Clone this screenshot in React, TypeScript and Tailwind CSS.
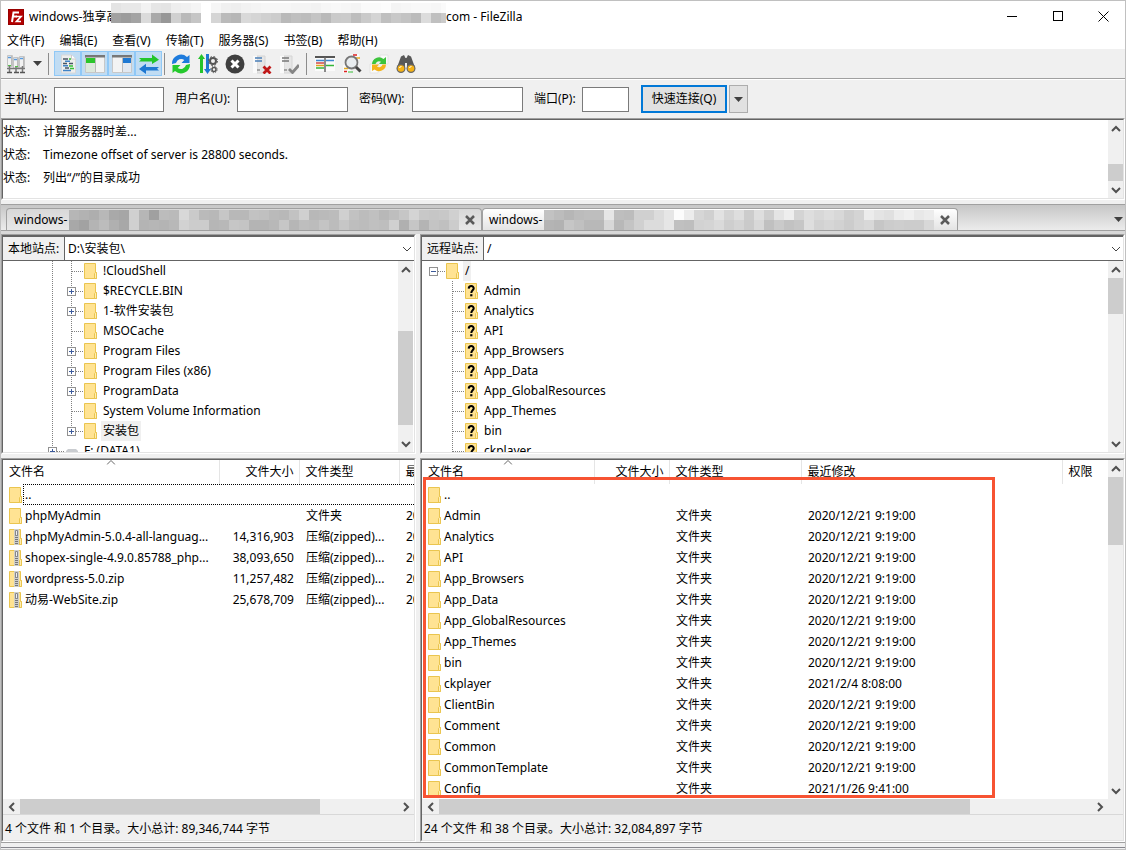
import type { ReactNode } from "react"

const menus = ["文件(F)", "编辑(E)", "查看(V)", "传输(T)", "服务器(S)", "书签(B)", "帮助(H)"]

const logs = ["计算服务器时差...", "Timezone offset of server is 28800 seconds.", "列出“/”的目录成功"]

const localDirs = [
  { name: "!CloudShell", box: false },
  { name: "$RECYCLE.BIN", box: true },
  { name: "1-软件安装包", box: true },
  { name: "MSOCache", box: false },
  { name: "Program Files", box: true },
  { name: "Program Files (x86)", box: true },
  { name: "ProgramData", box: true },
  { name: "System Volume Information", box: false },
  { name: "安装包", box: true, selected: true }
]

const remoteDirs = [
  "Admin",
  "Analytics",
  "API",
  "App_Browsers",
  "App_Data",
  "App_GlobalResources",
  "App_Themes",
  "bin",
  "ckplayer"
]

const localFiles = [
  { name: "phpMyAdmin", size: "", type: "文件夹" },
  { name: "phpMyAdmin-5.0.4-all-languag...", size: "14,316,903", type: "压缩(zipped)..." },
  { name: "shopex-single-4.9.0.85788_php...", size: "38,093,650", type: "压缩(zipped)..." },
  { name: "wordpress-5.0.zip", size: "11,257,482", type: "压缩(zipped)..." },
  { name: "动易-WebSite.zip", size: "25,678,709", type: "压缩(zipped)..." }
]

const remoteFiles = [
  { name: "Admin", date: "2020/12/21 9:19:00" },
  { name: "Analytics", date: "2020/12/21 9:19:00" },
  { name: "API", date: "2020/12/21 9:19:00" },
  { name: "App_Browsers", date: "2020/12/21 9:19:00" },
  { name: "App_Data", date: "2020/12/21 9:19:00" },
  { name: "App_GlobalResources", date: "2020/12/21 9:19:00" },
  { name: "App_Themes", date: "2020/12/21 9:19:00" },
  { name: "bin", date: "2020/12/21 9:19:00" },
  { name: "ckplayer", date: "2021/2/4 8:08:00" },
  { name: "ClientBin", date: "2020/12/21 9:19:00" },
  { name: "Comment", date: "2020/12/21 9:19:00" },
  { name: "Common", date: "2020/12/21 9:19:00" },
  { name: "CommonTemplate", date: "2020/12/21 9:19:00" },
  { name: "Config", date: "2021/1/26 9:41:00" }
]

// one hex digit pair per cell, grey level
const titleCells = [
  "e4e8e8f2e6e4eef0f4fff6f0eef2f4f6f6f6f4f4f2f6f8f6f4fafafcf4f6f8f8f6fa",
  "a19ca3dba997d0b9c5ffd5bab6d9d5d0ccb9bfbcc4b9cacbbdcad4bfc8c3bbdcc0cac0"
]
const tabCellsA = [
  "b6b2aeb8a9a6d0b6a0bcbad8cabab8c6b8b8c2c0bab8c2d0b8babcd0c2bcc0b8bec6d4c8c6c8d0d4cc",
  "a8a2b4bcb0a8d0b4b6b4b8d2ccccb6b8c6c4b4b4b8c6b6bebcc4bcc6bebcc0bed0b0c6b4c4c0cc"
]
const tabCellsB = [
  "c2bcb6bcbebee6bebcd0d0dce6fcecd6d0e2d4deccdeceE4eed4ded8ddd8ced4ece4e0ecf0e8ec",
  "b4b2c6c0b8b8d8b8c4d0dcdce6c0bed2d4daced4cad8c0cac2c6ded2d6d2ccd4d8c6ccceccccd8"
]

// blurred-out host name
function Mosaic({ cells, count }: { cells: string[]; count: number }) {
  return (
    <svg width={count * 10} height="20" className="shrink-0" shapeRendering="crispEdges" aria-hidden="true">
      {cells.map((row, y) =>
        Array.from({ length: count }, (_, x) => {
          const v = row.slice(x * 2, x * 2 + 2) || "d0"
          return <rect key={`${x}-${y}`} x={x * 10} y={y * 10} width="10" height="10" fill={`#${v}${v}${v}`} />
        })
      )}
    </svg>
  )
}

function Folder({ kind = "plain" }: { kind?: "plain" | "unknown" | "zip" }) {
  return (
    <svg width="13" height="16" viewBox="0 0 13 16" className="relative shrink-0" aria-hidden="true">
      <path d="M.5.5h11v9h1v6H.5z" fill="#ffe393" stroke="#eac54f" />
      <path d="M10.5 15.5v-5l1-1h1v6z" fill="#ffedb0" stroke="#eac54f" />
      {kind === "unknown" && (
        <>
          <path d="M3.7 5.6C3.8 2.2 8.900 2.300 8.700 5.400 8.600 7.300 6.300 7.500 6.300 10" fill="none" stroke="#000" strokeWidth="2" />
          <rect x="5.2" y="11.2" width="2.2" height="2.1" fill="#000" />
        </>
      )}
      {kind === "zip" && (
        <>
          <path d="M5 0h5v16H5z" fill="#cfcfca" />
          <path d="M7.5 6v10" stroke="#77777a" strokeWidth="3" strokeDasharray="1 1" />
          <path d="M6.500 1.500h2v5h-2z" fill="#eee" stroke="#88888a" />
        </>
      )}
    </svg>
  )
}

function Branch({ box = "", up = true, down = true, line = true }: { box?: string; up?: boolean; down?: boolean; line?: boolean }) {
  return (
    <svg width="17" height="20" viewBox="0 0 17 20" className="shrink-0" shapeRendering="crispEdges" aria-hidden="true">
      <g stroke="#808080" strokeDasharray="1 1">
        {up && <path d="M4.5 0v10" />}
        {down && <path d="M4.5 10v10" />}
        {line && <path d="M5 10.5h11" />}
      </g>
      {box && (
        <>
          <rect x=".5" y="6.5" width="8" height="8" fill="#fff" stroke="#919191" />
          <path d={box === "+" ? "M2 10.5h5M4.5 8v5" : "M2 10.5h5"} stroke="#3c5a9a" />
        </>
      )}
    </svg>
  )
}

function Chevron({ dir, thin = false }: { dir: "up" | "down" | "left" | "right"; thin?: boolean }) {
  const d = {
    up: "M1 7l4-4 4 4",
    down: "M1 3l4 4 4-4",
    left: "M7 1L3 5l4 4",
    right: "M3 1l4 4-4 4"
  }[dir]
  return (
    <svg width="10" height="10" viewBox="0 0 10 10" fill="none" stroke={thin ? "#444" : "#505050"} strokeWidth={thin ? 1 : 2} aria-hidden="true">
      <path d={d} />
    </svg>
  )
}

function Caret() {
  return (
    <svg width="9" height="5" viewBox="0 0 9 5" aria-hidden="true">
      <path d="M0 0h9L4.5 5z" fill="#404040" />
    </svg>
  )
}

function VScroll({ before, thumb }: { before: string; thumb: string }) {
  return (
    <div className="flex w-[15px] shrink-0 flex-col bg-[#f0f0f0]">
      <button aria-label="向上滚动" className="flex h-[17px] shrink-0 items-center justify-center">
        <Chevron dir="up" />
      </button>
      <div className={before} />
      <div className={`bg-[#cdcdcd] ${thumb}`} />
      <div className="flex-1" />
      <button aria-label="向下滚动" className="flex h-[17px] shrink-0 items-center justify-center">
        <Chevron dir="down" />
      </button>
    </div>
  )
}

function HScroll({ thumb }: { thumb: string }) {
  return (
    <div className="flex h-[15px] min-w-0 flex-1 bg-[#f0f0f0]">
      <button aria-label="向左滚动" className="flex w-[17px] shrink-0 items-center justify-center">
        <Chevron dir="left" />
      </button>
      <div className={`bg-[#cdcdcd] ${thumb}`} />
      <div className="flex-1" />
      <button aria-label="向右滚动" className="flex w-[17px] shrink-0 items-center justify-center">
        <Chevron dir="right" />
      </button>
    </div>
  )
}

// classic two-step sunken edge
function Sunken({ className = "", children }: { className?: string; children: ReactNode }) {
  return (
    <div className={`flex min-w-0 flex-col border border-t-[#a0a0a0] border-r-white border-b-white border-l-[#a0a0a0] ${className}`}>
      <div className="flex min-h-0 flex-1 flex-col border border-t-[#646464] border-r-[#e3e3e3] border-b-[#e3e3e3] border-l-[#646464]">
        {children}
      </div>
    </div>
  )
}

const server = (
  <>
    <path d="M5 2h8v17H5z" fill="#e6e6e6" stroke="#d4d4d4" />
    <path d="M1 2h4v17H1z" fill="#fafafa" />
  </>
)

const icons: Record<string, ReactNode> = {
  sites: (
    <>
      <path d="M1.500 1.500h5v11h-5zM7.500 3.500h5v11h-5zM13.500 2.500h5v11h-5z" fill="#f2f2f2" stroke="#c4c4c4" />
      <path d="M2 3.500h3M8 5.500h3M14 4.500h3" stroke="#5b9bdc" strokeWidth="1.500" />
      <path d="M5.500 2v10M11.500 4v10M17.500 3v10" stroke="#bbb" />
      <path d="M1 14.500h18M3.500 12v6M10 13v5M16.500 12v6" stroke="#777" strokeWidth="1.500" />
      <path d="M1 18.500h5M8 18.500h5M14 18.500h5" stroke="#555" strokeWidth="1.500" />
      <path d="M9 12.500h3M2 11.500h3" stroke="#55c04a" />
    </>
  ),
  log: (
    <>
      <path d="M3.500 1h10l4 4v14h-14z" fill="#eee" stroke="#d8d8d8" />
      <path d="M13.500 1v4h4" fill="#fff" stroke="#ccc" />
      <path d="M5 5h5M5 9.500h4M11 9.500h4M7 14h4" stroke="#4a5562" strokeWidth="1.500" />
      <path d="M7 7.200h5M5 11.800h5M5 16.500h8" stroke="#3f83c6" strokeWidth="1.500" />
      <path d="M11 12h4M12 14.500h4M11 5h2" stroke="#35c135" strokeWidth="1.500" />
    </>
  ),
  local: (
    <>
      <path d="M.5 1.500h19v17H.5z" fill="#f3f3f3" stroke="#c8c8c8" />
      <path d="M0 1h20v2.500H0z" fill="#777" />
      <path d="M1 4h9v5H1z" fill="#2bc52b" />
      <path d="M1 9h9v9H1z" fill="#dde8dd" />
      <path d="M10.500 4v14" stroke="#bbb" />
    </>
  ),
  remote: (
    <>
      <path d="M.5 1.500h19v17H.5z" fill="#f3f3f3" stroke="#c8c8c8" />
      <path d="M0 1h20v2.500H0z" fill="#777" />
      <path d="M11 4h8v5h-8z" fill="#1e78d2" />
      <path d="M11 9h8v9h-8z" fill="#e2e8f0" />
      <path d="M10.500 4v14" stroke="#bbb" />
    </>
  ),
  queue: (
    <>
      <path d="M0 4h13V.5L20 5.700 13 10V7.500H0L2 5.800z" fill="#22c52b" />
      <path d="M20 13H7V9.700L0 15l7 5v-3.500h13l-2-1.700z" fill="#1e78d2" />
    </>
  ),
  refresh: (
    <>
      <path d="M1 10a9 9 0 0 1 15-7l2.500-2v8h-8l2.800-3A5.300 5.300 0 0 0 5 9z" fill="#1e7bdc" />
      <path d="M19 10a9 9 0 0 1-15 7l-2.500 2v-8h8l-2.800 3A5.300 5.300 0 0 0 15 11z" fill="#25c92d" />
    </>
  ),
  process: (
    <>
      <path d="M3.500 0L7 5H5v14H2V5H0z" fill="#25c42b" />
      <path d="M9.500 20L6 15h2V0h3v15h2z" fill="#1e78d2" />
      <circle cx="15" cy="7" r="3" fill="none" stroke="#555" strokeWidth="2" />
      <circle cx="15" cy="7" r="4.500" fill="none" stroke="#555" strokeDasharray="1.800 1.730" />
      <circle cx="16" cy="15.500" r="2" fill="none" stroke="#555" strokeWidth="1.500" />
      <circle cx="16" cy="15.500" r="3.200" fill="none" stroke="#555" strokeDasharray="1.200 1.310" />
    </>
  ),
  cancel: (
    <>
      <circle cx="10" cy="10" r="9.500" fill="#3f3f3f" />
      <path d="M6.500 6.500l7 7M13.500 6.500l-7 7" stroke="#fff" strokeWidth="3" />
    </>
  ),
  disconnect: (
    <>
      {server}
      <path d="M3 4h7M3 7h7" stroke="#4a7fb8" strokeWidth="1.500" />
      <path d="M5 16h3" stroke="#666" />
      <path d="M11.500 12.500l7 7M18.500 12.500l-7 7" stroke="#c01818" strokeWidth="2.800" />
    </>
  ),
  reconnect: (
    <>
      {server}
      <path d="M3 4h7M3 7h7" stroke="#777" strokeWidth="1.500" />
      <path d="M5 16h3" stroke="#666" />
      <path d="M10 15l3.500 3.500L20 11" fill="none" stroke="#858585" strokeWidth="2.800" />
    </>
  ),
  filter: (
    <>
      <path d="M0 2h20v15H0z" fill="#fafafa" />
      <path d="M0 3h20" stroke="#555" strokeWidth="2" />
      <path d="M10 3v15" stroke="#666" strokeWidth="1.500" />
      <path d="M1 6.500h8M11 6.500h8" stroke="#3d88d2" strokeWidth="1.500" />
      <path d="M1 9h8" stroke="#d14747" strokeWidth="1.500" />
      <path d="M1 11.500h8" stroke="#e3a11a" strokeWidth="1.500" />
      <path d="M1 14h8M11 11.500h8" stroke="#34b63a" strokeWidth="1.500" />
    </>
  ),
  search: (
    <>
      <path d="M8 0h9v10H8zM1 11h8v8H1z" fill="#fafafa" />
      <path d="M11 1h4M2 17.500h3" stroke="#d22" strokeWidth="1.500" />
      <path d="M14 4h4M2 14.500h4" stroke="#e8ad20" strokeWidth="1.500" />
      <path d="M6 18h5" stroke="#3b3" />
      <circle cx="9.500" cy="8.500" r="6" fill="#e9edf0" stroke="#777" strokeWidth="1.800" />
      <path d="M14 13l4.500 4.500" stroke="#444" strokeWidth="3" />
    </>
  ),
  compare: (
    <>
      <path d="M11 1h8v9h-8zM1 10h8v9H1z" fill="#fafafa" stroke="#e4e4e4" />
      <path d="M3 10a7 7 0 0 1 11.500-5L17 3v7h-7l2-2.200A3.800 3.800 0 0 0 6.500 10z" fill="#3cc43c" />
      <path d="M17 10.500a7 7 0 0 1-11.500 5L3 17v-6.500h7l-2 2.300a3.800 3.800 0 0 0 5.500-2.300z" fill="#f4b41b" />
    </>
  ),
  find: (
    <>
      <path d="M5 2.500L8 1l1.500 3h1L12 1l3 1.500 4 11H11V9H9v4.500H1z" fill="#585858" />
      <circle cx="5" cy="14.500" r="4.500" fill="#666" />
      <circle cx="15" cy="14.500" r="4.500" fill="#666" />
      <circle cx="5" cy="14.500" r="3.300" fill="#f6b316" />
      <circle cx="15" cy="14.500" r="3.300" fill="#f6b316" />
      <path d="M3.500 14a2 2 0 0 1 2-1.500M13.500 14a2 2 0 0 1 2-1.500" stroke="#fff" fill="none" />
    </>
  )
}

function ToolButton({ name, label, pressed = false }: { name: string; label: string; pressed?: boolean }) {
  return (
    <button
      aria-label={label}
      className={
        pressed
          ? "flex h-[25px] w-[27px] items-center justify-center border border-[#90c8f6] bg-[#c0dcf3]"
          : "flex h-[25px] w-[27px] items-center justify-center"
      }>
      <svg width="20" height="20" viewBox="0 0 20 20" aria-hidden="true">
        {icons[name]}
      </svg>
    </button>
  )
}

function TitleBar() {
  return (
    <header className="flex h-[31px] shrink-0 items-center bg-white pl-[7px]">
      <svg width="16" height="16" viewBox="0 0 16 16" className="mr-[5px]" aria-hidden="true">
        <rect width="16" height="16" fill="#b30000" />
        <rect x=".5" y=".5" width="15" height="15" fill="none" stroke="#7d0000" strokeDasharray="1 1" />
        <path d="M4 13L5.500 3.500H11M4.500 7.500H9" fill="none" stroke="#fff" strokeWidth="2" />
        <path d="M8 7.500h5L8.500 12.500H13" fill="none" stroke="#fff" strokeWidth="1.700" />
      </svg>
      <div className="w-[82px] overflow-hidden whitespace-nowrap">windows-独享高</div>
      <div className="w-[335px] overflow-hidden pb-2">
        <Mosaic cells={titleCells} count={34} />
      </div>
      <div>com - FileZilla</div>
      <div className="ml-auto flex">
        <button aria-label="最小化" className="flex h-[30px] w-[46px] items-center justify-center">
          <svg width="11" height="11" stroke="#000" shapeRendering="crispEdges">
            <path d="M0 5.500h10" />
          </svg>
        </button>
        <button aria-label="最大化" className="flex h-[30px] w-[46px] items-center justify-center">
          <svg width="11" height="11" stroke="#000" fill="none" shapeRendering="crispEdges">
            <path d="M.5.5h9v9h-9z" />
          </svg>
        </button>
        <button aria-label="关闭" className="flex h-[30px] w-[44px] items-center justify-center">
          <svg width="11" height="11" stroke="#000">
            <path d="M.5.5l10 10M10.500.5l-10 10" />
          </svg>
        </button>
      </div>
    </header>
  )
}

function Toolbar() {
  return (
    <div className="flex h-[31px] shrink-0 items-center border-b border-white bg-[#f0f0f0]">
      <div className="flex h-full w-full items-center border-b border-[#a0a0a0] pl-px">
        <ToolButton name="sites" label="站点管理器" />
        <button aria-label="打开站点列表" className="flex h-[25px] w-[17px] items-center justify-center">
          <Caret />
        </button>
        <div className="mr-[5px] ml-[2px] h-[22px] w-px bg-[#8c8c8c]" />
        <ToolButton name="log" label="消息日志" pressed />
        <ToolButton name="local" label="本地目录树" pressed />
        <ToolButton name="remote" label="远程目录树" pressed />
        <ToolButton name="queue" label="传输队列" pressed />
        <div className="mx-[2px] h-[22px] w-px bg-[#8c8c8c]" />
        <ToolButton name="refresh" label="刷新" />
        <ToolButton name="process" label="处理队列" />
        <ToolButton name="cancel" label="取消" />
        <ToolButton name="disconnect" label="断开" />
        <ToolButton name="reconnect" label="重新连接" />
        <div className="mx-1 h-[22px] w-px bg-[#8c8c8c]" />
        <ToolButton name="filter" label="过滤器" />
        <ToolButton name="search" label="搜索" />
        <ToolButton name="compare" label="目录比较" />
        <ToolButton name="find" label="查找文件" />
      </div>
    </div>
  )
}

function QuickConnect() {
  const input = "h-[25px] border border-[#7a7a7a] bg-white px-1 outline-none"
  return (
    <form className="flex h-[38px] shrink-0 items-center whitespace-nowrap pl-[3px]">
      <label htmlFor="host" className="w-[50px]">主机(H):</label>
      <input id="host" className={`w-[110px] ${input}`} />
      <label htmlFor="user" className="ml-[11px] w-[62px]">用户名(U):</label>
      <input id="user" className={`w-[111px] ${input}`} />
      <label htmlFor="pass" className="ml-[11px] w-[53px]">密码(W):</label>
      <input id="pass" type="password" className={`w-[111px] ${input}`} />
      <label htmlFor="port" className="ml-[11px] w-[48px]">端口(P):</label>
      <input id="port" className={`w-[47px] ${input}`} />
      <button type="button" className="ml-3 h-[28px] w-[86px] border-2 border-[#0078d7] bg-[#e1e1e1]">快速连接(Q)</button>
      <button type="button" aria-label="历史" className="ml-[2px] flex h-[28px] w-[19px] items-center justify-center border border-[#adadad] bg-[#e1e1e1]">
        <Caret />
      </button>
    </form>
  )
}

function Tab({ cells, active = false }: { cells: string[]; active?: boolean }) {
  return (
    <div
      role="tab"
      aria-selected={active}
      className={
        active
          ? "flex h-[22px] w-[476px] items-center rounded-t-sm border border-b-0 border-[#a0a0a0] bg-linear-to-b from-white to-[#e4e4e4] pl-[6px]"
          : "flex h-[22px] w-[476px] items-center rounded-t-sm border border-b-0 border-[#a0a0a0] bg-linear-to-b from-[#d8d8d8] to-[#e8e8e8] pl-[7px]"
      }>
      <span className="w-[55px]">windows-</span>
      <Mosaic cells={cells} count={39} />
      <button aria-label="关闭标签" className="ml-[6px]">
        <svg width="10" height="10" viewBox="0 0 10 10" stroke="#5a5a5a" strokeWidth="2.500">
          <path d="M1 1l8 8M9 1L1 9" />
        </svg>
      </button>
    </div>
  )
}

function PathBar({ id, label, value }: { id: string; label: string; value: string }) {
  return (
    <div className="flex h-[25px] shrink-0 border-t border-b border-[#646464] bg-white">
      <label htmlFor={id} className="flex w-[62px] shrink-0 items-center whitespace-nowrap border-r border-[#646464] bg-[#f0f0f0] pl-[5px]">
        {label}
      </label>
      <div className="relative flex-1">
        <select id={id} className="h-full w-full appearance-none bg-white pl-[3px] outline-none">
          <option>{value}</option>
        </select>
        <div className="pointer-events-none absolute top-[7px] right-[2px]">
          <Chevron dir="down" thin />
        </div>
      </div>
    </div>
  )
}

function SortMark() {
  return (
    <svg width="9" height="5" viewBox="0 0 9 5" fill="none" stroke="#666" className="absolute top-0 left-1/2 -translate-x-1/2" aria-hidden="true">
      <path d="M.5 4.500l4-4 4 4" />
    </svg>
  )
}

const th = "relative border-r border-[#e5e5e5] pl-[6px] text-left font-normal"

function LocalPane() {
  return (
    <section className="flex w-[415px] shrink-0 flex-col">
      <Sunken>
        <PathBar id="local-path" label="本地站点:" value="D:\安装包\" />
        <div className="flex h-[191px] bg-white pr-px">
          <ul className="min-w-0 flex-1 overflow-hidden">
            {localDirs.map((d) => (
              <li key={d.name} className="flex h-5 items-center pl-[45px]">
                <Branch line={false} />
                <div className="w-[2px]" />
                <Branch box={d.box ? "+" : ""} down={!d.selected} />
                <Folder />
                <span className={d.selected ? "ml-1 bg-[#f0f0f0] px-[2px] leading-5" : "ml-[6px]"}>{d.name}</span>
              </li>
            ))}
            <li className="flex h-5 items-center pl-[45px]">
              <Branch box="+" />
              <svg width="13" height="16" viewBox="0 0 13 16" aria-hidden="true">
                <path d="M1 8l2-2h8l2 2v4H1z" fill="#c9ccd0" />
              </svg>
              <span className="ml-[6px]">F: (DATA1)</span>
            </li>
          </ul>
          <VScroll before="h-[53px]" thumb="h-[94px]" />
        </div>
      </Sunken>
      <Sunken className="mt-1 min-h-0 flex-1">
        <div className="min-h-0 flex-1 overflow-hidden bg-white">
          <table className="w-full table-fixed border-collapse whitespace-nowrap">
            <colgroup>
              <col className="w-[216px]" />
              <col className="w-[80px]" />
              <col className="w-[100px]" />
              <col />
            </colgroup>
            <thead>
              <tr className="h-6">
                <th className={th}>文件名<SortMark /></th>
                <th className="border-r border-[#e5e5e5] pr-[5px] text-right font-normal">文件大小</th>
                <th className={th}>文件类型</th>
                <th className="pl-[6px] text-left font-normal">最</th>
              </tr>
            </thead>
            <tbody>
              <tr className="h-[21px]">
                <td colSpan={4} className="pl-[6px]">
                  <div className="flex items-center">
                    <Folder />
                    <span className="ml-px h-[21px] flex-1 border border-r-0 border-dotted border-black pl-px leading-[19px]">..</span>
                  </div>
                </td>
              </tr>
              {localFiles.map((f) => (
                <tr key={f.name} className="h-[21px]">
                  <td className="pl-[6px]">
                    <div className="flex items-center gap-[3px]">
                      <Folder kind={f.size ? "zip" : "plain"} />
                      {f.name}
                    </div>
                  </td>
                  <td className="pr-[5px] text-right">{f.size}</td>
                  <td className="pl-[7px]">{f.type}</td>
                  <td className="pl-[7px]">20</td>
                </tr>
              ))}
            </tbody>
          </table>
        </div>
        <div className="flex">
          <HScroll thumb="w-[300px]" />
        </div>
        <footer className="flex h-[26px] shrink-0 items-center border-t border-[#d8d8d8] pt-[2px] pl-[2px]">
          4 个文件 和 1 个目录。大小总计: 89,346,744 字节
        </footer>
      </Sunken>
    </section>
  )
}

function RemotePane() {
  return (
    <section className="flex min-w-0 flex-1 flex-col">
      <Sunken>
        <PathBar id="remote-path" label="远程站点:" value="/" />
        <div className="flex h-[191px] bg-white">
          <ul className="min-w-0 flex-1 overflow-hidden">
            <li className="flex h-5 items-center pl-[7px]">
              <Branch box="-" up={false} down={false} />
              <Folder />
              <span className="ml-1 bg-[#f0f0f0] px-[2px] leading-5">/</span>
            </li>
            {remoteDirs.map((name) => (
              <li key={name} className="flex h-5 items-center pl-[26px]">
                <Branch />
                <Folder kind="unknown" />
                <span className="ml-[6px]">{name}</span>
              </li>
            ))}
          </ul>
          <VScroll before="h-0" thumb="h-[36px]" />
        </div>
      </Sunken>
      <Sunken className="relative mt-1 min-h-0 flex-1">
        <div className="flex min-h-0 flex-1 bg-white">
          <div className="min-w-0 flex-1 overflow-hidden">
            <table className="w-full table-fixed border-collapse whitespace-nowrap">
              <colgroup>
                <col className="w-[172px]" />
                <col className="w-[75px]" />
                <col className="w-[132px]" />
                <col className="w-[261px]" />
                <col />
              </colgroup>
              <thead>
                <tr className="h-6">
                  <th className={th}>文件名<SortMark /></th>
                  <th className="border-r border-[#e5e5e5] pr-[5px] text-right font-normal">文件大小</th>
                  <th className={th}>文件类型</th>
                  <th className={th}>最近修改</th>
                  <th className="pl-[6px] text-left font-normal">权限</th>
                </tr>
              </thead>
              <tbody>
                <tr className="h-[21px]">
                  <td colSpan={5} className="pl-[6px]">
                    <div className="flex items-center gap-[3px]">
                      <Folder />
                      ..
                    </div>
                  </td>
                </tr>
                {remoteFiles.map((f) => (
                  <tr key={f.name} className="h-[21px]">
                    <td className="pl-[6px]">
                      <div className="flex items-center gap-[3px]">
                        <Folder />
                        {f.name}
                      </div>
                    </td>
                    <td />
                    <td className="pl-[7px]">文件夹</td>
                    <td className="pl-[7px]">{f.date}</td>
                    <td />
                  </tr>
                ))}
              </tbody>
            </table>
          </div>
          <VScroll before="h-0" thumb="h-[68px]" />
        </div>
        <div className="flex bg-[#f0f0f0] pr-[15px]">
          <HScroll thumb="w-[531px]" />
        </div>
        <footer className="flex h-[26px] shrink-0 items-center border-t border-[#d8d8d8] pt-[2px] pl-[2px]">
          24 个文件 和 38 个目录。大小总计: 32,084,897 字节
        </footer>
        {/* highlight frame over the remote file list */}
        <div className="pointer-events-none absolute top-[18px] bottom-[43px] left-[2px] w-[572px] border-3 border-[#f75332]" />
      </Sunken>
    </section>
  )
}

export default function App() {
  return (
    <div className="flex h-screen w-full flex-col overflow-hidden border border-[#c0c0c0] bg-[#f0f0f0] font-['Noto_Sans','Noto_Sans_CJK_SC',sans-serif] text-[12px] leading-4 text-black">
      <TitleBar />
      <nav className="flex h-[17px] shrink-0 items-center gap-[15px] bg-white pl-[6px]">
        {menus.map((m) => (
          <button key={m} className="whitespace-nowrap">{m}</button>
        ))}
      </nav>
      <Toolbar />
      <QuickConnect />
      <Sunken className="shrink-0">
        <div className="flex h-[78px] bg-white">
          <div className="min-w-0 flex-1 overflow-hidden">
            {logs.map((l) => (
              <div key={l} className="flex h-[23px] items-center">
                <span className="w-10 shrink-0">状态:</span>
                <span>{l}</span>
              </div>
            ))}
          </div>
          <VScroll before="h-[27px]" thumb="h-[17px]" />
        </div>
      </Sunken>
      <div role="tablist" className="mt-1 flex h-[27px] shrink-0 items-end border-t border-b border-[#a0a0a0] bg-linear-to-b from-[#c6c6c6] to-[#ececec] pl-[5px]">
        <Tab cells={tabCellsA} />
        <Tab cells={tabCellsB} active />
        <button aria-label="标签列表" className="mr-[2px] ml-auto flex h-[22px] items-center">
          <Caret />
        </button>
      </div>
      <div className="h-[3px] shrink-0 bg-[#d8d8d8]" />
      <main className="flex min-h-0 flex-1 gap-1">
        <LocalPane />
        <RemotePane />
      </main>
      <div className="h-[7px] shrink-0 border-t border-[#a0a0a0] pt-1">
        <div className="h-px bg-[#85858c]" />
      </div>
    </div>
  )
}
